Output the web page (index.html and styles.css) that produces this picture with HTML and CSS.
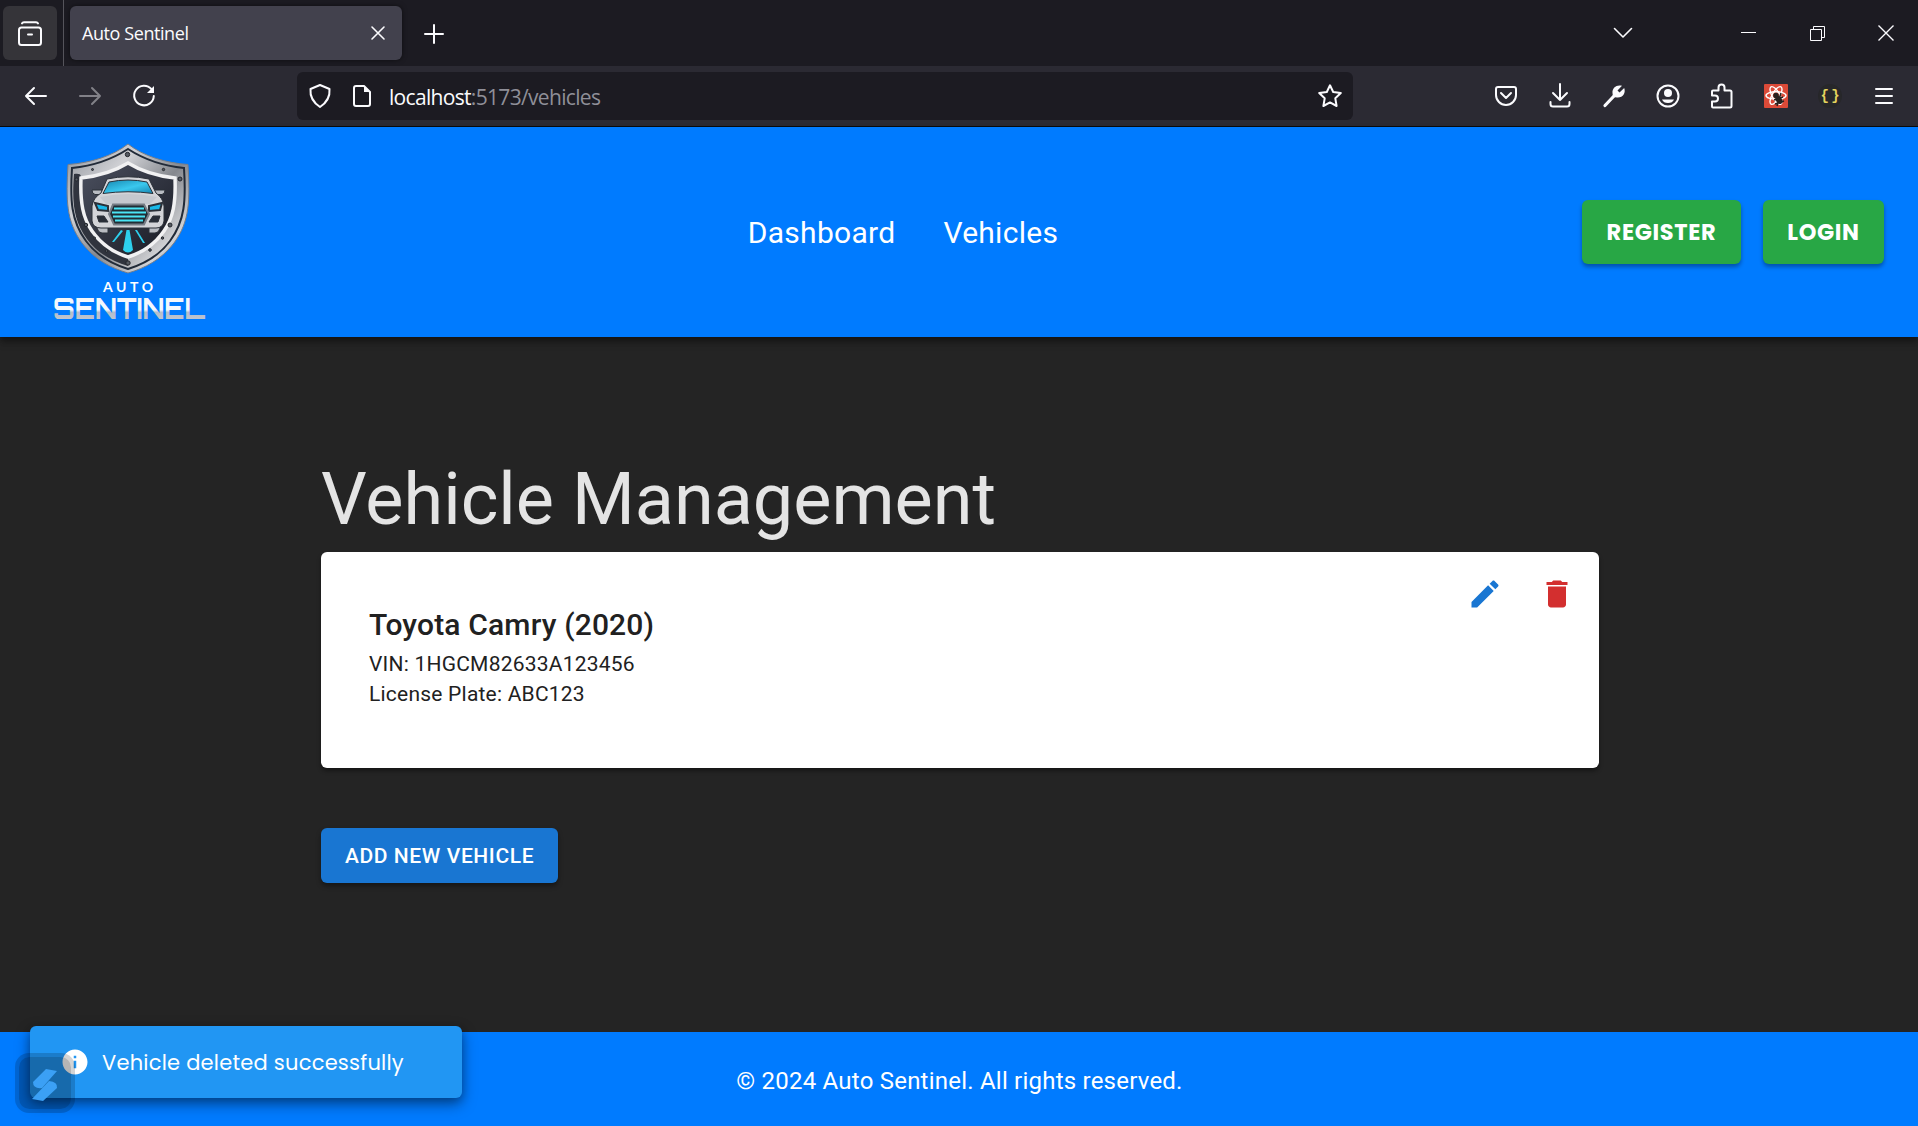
FILE: index.html
```html
<!DOCTYPE html>
<html lang="en">
<head>
<meta charset="utf-8">
<title>Auto Sentinel</title>
<link rel="stylesheet" href="styles.css">
</head>
<body>
<div class="window">
  <div class="tabstrip">
    <div class="tabmanager">
      <svg width="24" height="27" viewBox="0 0 24 27" class="line"><path d="M4 2.4Q4.500 1.300 6 1.300H18Q19.500 1.300 20 2.400M3.500 6.500H20.500Q23 6.500 23 9V21.500Q23 24 20.500 24H3.500Q1 24 1 21.500V9Q1 6.500 3.500 6.500ZM10 13.500H14"/></svg>
    </div>
    <div class="tab">
      <span class="tab-title">Auto Sentinel</span>
      <svg width="14" height="14" viewBox="0 0 14 14" class="thin"><path d="M1 1 13 13M13 1 1 13"/></svg>
    </div>
    <svg class="newtab thin" width="18" height="18" viewBox="0 0 18 18"><path d="M9 0V18M0 9H18"/></svg>
    <div class="winctl">
      <svg width="20" height="12" viewBox="0 0 20 12" class="thin"><path d="M1.500 1.500 10 10 18.500 1.500"/></svg>
      <svg width="15" height="15" viewBox="0 0 15 15" class="hair"><path d="M0 6.500H15"/></svg>
      <svg width="15" height="15" viewBox="0 0 15 15" class="hair"><path d="M.5 3.500H11.500V14.500H.5ZM3.500 3.500V.5H14.500V11.500H11.500"/></svg>
      <svg width="16" height="16" viewBox="0 0 16 16" class="hair cross"><path d="M.5.5 15.500 15.500M15.500.5.5 15.500"/></svg>
    </div>
  </div>
  <div class="toolbar">
    <div class="navbtns">
      <svg width="24" height="24" viewBox="0 0 24 24" class="line"><path d="M22 12H2M10 4 2 12 10 20"/></svg>
      <svg width="24" height="24" viewBox="0 0 24 24" class="line dim"><path d="M2 12H22M14 4 22 12 14 20"/></svg>
      <svg width="24" height="24" viewBox="0 0 24 24" class="line"><path d="M19.500 5.200A9.800 9.800 0 1 0 21.800 12"/><path class="fill" d="M22 2V9H15Z"/></svg>
    </div>
    <div class="urlbar">
      <svg width="24" height="26" viewBox="0 0 24 26" class="line"><path d="M12 2 21.500 6Q22.500 17 12 24Q1.500 17 2.500 6Z"/></svg>
      <svg width="20" height="24" viewBox="0 0 20 24" class="line"><path d="M4 2H12L18 8V20Q18 22 16 22H4Q2 22 2 20V4Q2 2 4 2Z"/><path class="fill" d="M12 2V8H18Z"/></svg>
      <span class="url"><b>localhost</b>:5173/vehicles</span>
      <svg width="26" height="26" viewBox="0 0 26 26" class="line"><path d="M13 2.300 16.200 9 23.800 10 18.300 15.300 19.600 23 13 19.400 6.400 23 7.700 15.300 2.200 10 9.800 9Z"/></svg>
    </div>
    <div class="tools">
      <svg width="24" height="24" viewBox="0 0 24 24" class="line"><path d="M4 3H20Q22 3 22 5V11A10 10 0 0 1 2 11V5Q2 3 4 3ZM7 9 12 14 17 9"/></svg>
      <svg width="24" height="24" viewBox="0 0 24 24" class="line"><path d="M12 0V16M5 9 12 16 19 9M2.500 18V20Q2.500 22.500 5 22.500H19Q21.500 22.500 21.500 20V18"/></svg>
      <svg width="24" height="24" viewBox="0 0 24 24"><path d="M3 21.500 12 12" stroke="#fbfbfe" stroke-width="3.200" stroke-linecap="round"/><path fill="#fbfbfe" d="M20 1.800 15.500 6.500 17.500 8.500 22.200 4C24 9 21 14 15 13.500L11 13 10.500 9C10 3.500 15 .2 20 1.800Z"/></svg>
      <svg width="24" height="24" viewBox="0 0 24 24" class="line"><circle cx="12" cy="12" r="10.500"/><circle cx="12" cy="9" r="4" class="fill"/><path class="fill" d="M6 15.500H18Q16.500 19 12 19Q7.500 19 6 15.500Z"/></svg>
      <svg width="24" height="26" viewBox="0 0 24 26" class="line"><path d="M3 24.500Q2 24.500 2 23.500V18.500H5A3 3 0 0 0 5 12.500H2V8.500Q2 7.500 3 7.500H8.500V4.500A3 3 0 0 1 14.500 4.500V7.500H20Q21.500 7.500 21.500 9V23Q21.500 24.500 20 24.500Z"/></svg>
      <svg width="24" height="24" viewBox="0 0 24 24"><rect width="24" height="24" rx="1" fill="#dc4a38"/><g fill="none" stroke="#fff" stroke-width="1.400"><ellipse cx="12" cy="11.500" rx="10" ry="3.800"/><ellipse cx="12" cy="11.500" rx="10" ry="3.800" transform="rotate(60 12 11.500)"/><ellipse cx="12" cy="11.500" rx="10" ry="3.800" transform="rotate(120 12 11.500)"/></g><g stroke="#272220" stroke-width="1.500"><circle cx="12" cy="11.500" r="2" fill="#272220"/><ellipse cx="15" cy="16" rx="2.200" ry="3.600" fill="#272220" transform="rotate(-35 15 16)"/><path d="M10 16 19 13M11 20 20 17M13 22 17 9"/></g></svg>
      <span class="braces">{ }</span>
      <svg width="24" height="18" viewBox="0 0 24 18" class="line"><path d="M4 2H20M4 9H20M4 16H20"/></svg>
    </div>
  </div>

  <header class="appbar">
    <svg class="logo" width="174" height="184" viewBox="50 140 174 184">
      <defs>
        <linearGradient id="steel" x1="0" y1="0" x2="1" y2="1"><stop offset="0" stop-color="#8d9197"/><stop offset=".3" stop-color="#d0d1d5"/><stop offset=".55" stop-color="#85888e"/><stop offset=".8" stop-color="#d2d3d6"/><stop offset="1" stop-color="#777a80"/></linearGradient>
        <linearGradient id="dark" x1="0" y1="0" x2="1" y2="1"><stop offset="0" stop-color="#4c5160"/><stop offset="1" stop-color="#171922"/></linearGradient>
        <linearGradient id="glass" x1="0" y1="0" x2="1" y2="1"><stop offset="0" stop-color="#1585ae"/><stop offset=".55" stop-color="#3ac8ee"/><stop offset="1" stop-color="#1685b2"/></linearGradient>
        <linearGradient id="word" x1="0" y1="0" x2="0" y2="1"><stop offset=".55" stop-color="#f4f8fd"/><stop offset=".62" stop-color="#b4bdca"/><stop offset="1" stop-color="#c7ccd5"/></linearGradient>
      </defs>
      <path fill="url(#steel)" stroke="#777e89" d="M128 144C113 156 90 163 68 164.500C66 200 66 221 82 243C95 260 111 268 128 273C145 268 161 260 174 243C190 221 190 200 188 164.500C166 163 143 156 128 144Z"/>
      <path fill="none" stroke="#222b38" stroke-width="2" d="M128 149C111 160 92 166 72 168C70 200 71 221 86 241C97 256 112 264 128 269C144 264 159 256 170 241C185 221 186 200 184 168C164 166 145 160 128 149Z"/>
      <path fill="#30343e" d="M74 174C80 173 82 175 80 178C80 207 86 223 95 234C104 245 116 252 128 257V266C112 261 97 253 87 239C73 220 72 201 74 174Z"/>
      <path fill="url(#dark)" stroke="#f1f1f2" stroke-width="3.500" d="M128 163C115 171 99 176 81 178C80 203 83 218 92 231C101 244 115 253 128 257C141 253 155 244 164 231C173 218 176 203 175 178C157 176 141 171 128 163Z"/>
      <g fill="#555a62" stroke="#24272d"><circle cx="127.500" cy="154.500" r="2.200"/><circle cx="128" cy="263" r="2.200"/><circle cx="76.500" cy="179.500" r="1.500"/><circle cx="180" cy="179" r="2"/><circle cx="86" cy="225" r="1.700"/><circle cx="170" cy="225" r="2"/><circle cx="106.500" cy="251" r="1.300"/><circle cx="150" cy="250" r="1.300"/><circle cx="92.500" cy="169.500" r="1"/><circle cx="163.500" cy="169.500" r="1.200"/><circle cx="94.500" cy="238" r="1"/><circle cx="162.500" cy="238" r="1.200"/></g>
      <g stroke="#2b3038" stroke-width="1">
        <path fill="#b9bcc2" d="M92 190H102V194.500H95Q92 194 92 190ZM165 190H154V194.500H162Q165 194 165 190ZM97 226H108V233H102Q97 232 97 226ZM160 226H149V233H155Q160 232 160 226Z"/>
        <path fill="#d3d4d8" d="M107 179Q128 174.500 149 179L156 193Q163 198 164 206V221Q163 228 156 228H101Q93 228 92 221V206Q93 198 101 193Z"/>
        <path fill="url(#glass)" d="M109 182Q128 178 147 182L153 193.500Q128 190 103 193.500Z"/>
        <path fill="#c5c8ce" stroke="none" d="M100 197Q128 191 157 197L150 204H106Z"/>
        <path fill="#18b8e8" stroke-width="2" d="M95 203 108 206V211L98 210ZM162 203 149 206V211L160 210Z"/>
        <path fill="#292e38" d="M97 216H104L108 222H99ZM160 216H153L149 222H158Z"/>
        <path fill="#202d35" stroke="#777d85" stroke-width="2" d="M113 204.500H144L149 214 144 224.500H114L109 214Z"/>
      </g>
      <path stroke="#4be4f4" stroke-width="2" d="M114 208.500H144M112 212.500H146M113 216.500H145M115 220.500H143"/>
      <path fill="#2dd0ed" d="M126.500 230H129.500L133 250Q128 255 123 250ZM121 230 112 242H114L123 231ZM135 230 143 243H145L137 230Z"/>
      <text x="103" y="292" class="logo-auto" textLength="50" lengthAdjust="spacing">AUTO</text>
      <text x="53" y="319" class="logo-word" textLength="152" lengthAdjust="spacingAndGlyphs" fill="url(#word)">SENTINEL</text>
    </svg>
    <nav class="links"><a>Dashboard</a><a>Vehicles</a></nav>
    <div class="actions"><button class="green register">REGISTER</button><button class="green login">LOGIN</button></div>
  </header>

  <main class="content">
    <h1>Vehicle Management</h1>
    <section class="card">
      <div class="info">
        <h2>Toyota Camry (2020)</h2>
        <p>VIN: 1HGCM82633A123456</p>
        <p>License Plate: ABC123</p>
      </div>
      <div class="card-actions">
        <svg width="36" height="36" viewBox="0 0 24 24" fill="#1976d2"><path d="M3 17.250V21h3.750L17.810 9.940l-3.750-3.750L3 17.250zM20.710 7.040c.39-.39.39-1.020 0-1.410l-2.340-2.340c-.39-.39-1.020-.39-1.410 0l-1.830 1.830 3.750 3.750 1.830-1.830z"/></svg>
        <svg width="36" height="36" viewBox="0 0 24 24" fill="#d32f2f"><path d="M6 19c0 1.100.9 2 2 2h8c1.100 0 2-.9 2-2V7H6v12zM19 4h-3.500l-1-1h-5l-1 1H5v2h14V4z"/></svg>
      </div>
    </section>
    <button class="add">ADD NEW VEHICLE</button>
  </main>

  <footer class="footer">© 2024 Auto Sentinel. All rights reserved.</footer>

  <div class="toast">
    <svg width="30" height="30" viewBox="0 0 24 24" fill="#fff"><path d="M12 2C6.480 2 2 6.480 2 12s4.480 10 10 10 10-4.480 10-10S17.520 2 12 2zm1 15h-2v-6h2v6zm0-8h-2V7h2v2z"/></svg>
    <span>Vehicle deleted successfully</span>
  </div>
  <div class="badge">
    <svg width="26" height="34" viewBox="0 0 26 34"><path fill="#3ba0f5" d="M14 1 25 3 10 20Q1 21 1 14ZM17 13Q26 14 25 20L11 33 0 31Z"/></svg>
  </div>
</div>
</body>
</html>
```
FILE: styles.css
```css
* { box-sizing: border-box; }
body { margin: 0; font-family: Roboto, "Liberation Sans", sans-serif; background: #242424; }
h1, h2, p { margin: 0; }
svg { display: block; flex: none; overflow: visible; }
button { border: 0; font-family: inherit; padding: 0; }
.window { position: relative; width: 1918px; height: 1126px; display: flex; flex-direction: column; overflow: hidden; }

.line, .thin, .hair { fill: none; stroke: #fbfbfe; stroke-width: 2; stroke-linecap: round; stroke-linejoin: round; }
.thin { stroke-width: 1.6; }
.hair { stroke-width: 1; stroke-linecap: butt; stroke-linejoin: miter; }
.cross { stroke-width: 1.4; }
.dim { opacity: .42; }
.line .fill { fill: #fbfbfe; stroke: none; }

.tabstrip { height: 66px; background: #1c1b22; display: flex; align-items: center; padding-left: 3px; flex: none; }
.tabmanager { width: 54px; height: 54px; border-radius: 6px; background: #353439; display: flex; align-items: center; justify-content: center; padding-top: 2px; }
.tab { position: relative; margin-left: 13px; width: 332px; height: 54px; border-radius: 6px; background: #42414d; box-shadow: 0 0 5px #0008; display: flex; align-items: center; justify-content: space-between; padding: 0 17px 0 12px; }
.tab::before { content: ""; position: absolute; left: -7px; top: -6px; width: 1px; height: 66px; background: #55545b; }
.tab-title { color: #fbfbfe; font: 18px "Open Sans", "Noto Sans", sans-serif; letter-spacing: -.42px; }
.newtab { margin: 2px 0 0 23px; stroke-width: 2; }
.winctl { margin-left: auto; display: flex; align-items: center; padding-right: 24px; }
.winctl svg:nth-child(2) { margin-left: 108px; }
.winctl svg:nth-child(3) { margin-left: 54px; }
.winctl svg:nth-child(4) { margin-left: 53px; }

.toolbar { height: 61px; background: #2b2a33; border-bottom: 1px solid #0c0c0d; display: flex; align-items: center; flex: none; padding-left: 24px; }
.navbtns { display: flex; gap: 30px; width: 273px; }
.urlbar { width: 1056px; height: 48px; border-radius: 6px; background: #1c1b22; display: flex; align-items: center; padding: 0 10px 0 11px; }
.urlbar svg:nth-child(2) { margin-left: 20px; }
.url { margin-left: 17px; padding-top: 2px; flex: 1; color: #8f8f98; font: 21px "Open Sans", "Noto Sans", sans-serif; letter-spacing: -.68px; }
.url b { color: #fbfbfe; font-weight: 400; }
.tools { margin-left: auto; padding-right: 22px; display: flex; align-items: center; gap: 30px; }
.braces { width: 24px; height: 24px; border-radius: 50%; background: #27272a; color: #e3d35e; font: 700 14px/24px "Liberation Mono", monospace; text-align: center; text-indent: -3px; letter-spacing: -3px; white-space: nowrap; }

.appbar { position: relative; z-index: 1; height: 210px; flex: none; background: #007bff; display: flex; justify-content: space-between; align-items: center; padding: 0 34px 0 50px; box-shadow: 0 3px 6px #0005, 0 6px 8px #0003; }
.logo-auto { font: 700 14px Lato, sans-serif; fill: #fff; }
.logo-word { font: 700 29px Orbitron, Montserrat, Inter, sans-serif; }
.links { display: flex; gap: 48px; color: #fff; font-size: 30px; letter-spacing: .28px; }
.actions { display: flex; gap: 22px; }
.green { height: 64px; border-radius: 6px; background: #28a745; color: #fff; font: 700 22.5px Poppins, Inter, sans-serif; letter-spacing: .64px; box-shadow: 0 3px 4px #0005; }
.register { width: 159px; }
.login { width: 121px; }

.content { flex: 1; padding: 121px 319px 0 321px; }
h1 { color: #e4e4e4; font-weight: 400; font-size: 72px; line-height: 84px; }
.card { margin-top: 10px; height: 216px; background: #fff; border-radius: 6px; box-shadow: 0 3px 4px #0006; display: flex; justify-content: space-between; padding: 49px 24px 0 48px; color: #212121; }
h2 { font-weight: 500; font-size: 30px; line-height: 48px; letter-spacing: .16px; }
.info p { font-size: 21px; line-height: 30px; letter-spacing: .22px; }
.card-actions { display: flex; gap: 36px; margin-top: -25px; }
.add { display: block; margin-top: 60px; width: 237px; height: 55px; border-radius: 6px; background: #1976d2; color: #fff; font-weight: 500; font-size: 21px; letter-spacing: .6px; box-shadow: 0 3px 5px #0006; }
.footer { height: 94px; flex: none; background: #007bff; color: #fff; font-size: 24px; letter-spacing: .22px; display: flex; align-items: center; justify-content: center; padding: 4px 0 0 1px; }

.toast { position: absolute; z-index: 2; left: 30px; top: 1026px; width: 432px; height: 72px; border-radius: 6px; background: #2196f3; color: #fff; display: flex; align-items: center; padding-left: 30px; gap: 12px; font: 21px Poppins, Inter, sans-serif; letter-spacing: .225px; box-shadow: 0 6px 15px #0006, 0 3px 8px #0003; white-space: nowrap; }
.badge { position: absolute; z-index: 3; left: 15px; top: 1053px; width: 60px; height: 60px; border-radius: 14px; border: 4px solid #0000002b; background: #0000004a; background-clip: padding-box; display: flex; align-items: center; justify-content: center; padding-top: 4px; }
```
